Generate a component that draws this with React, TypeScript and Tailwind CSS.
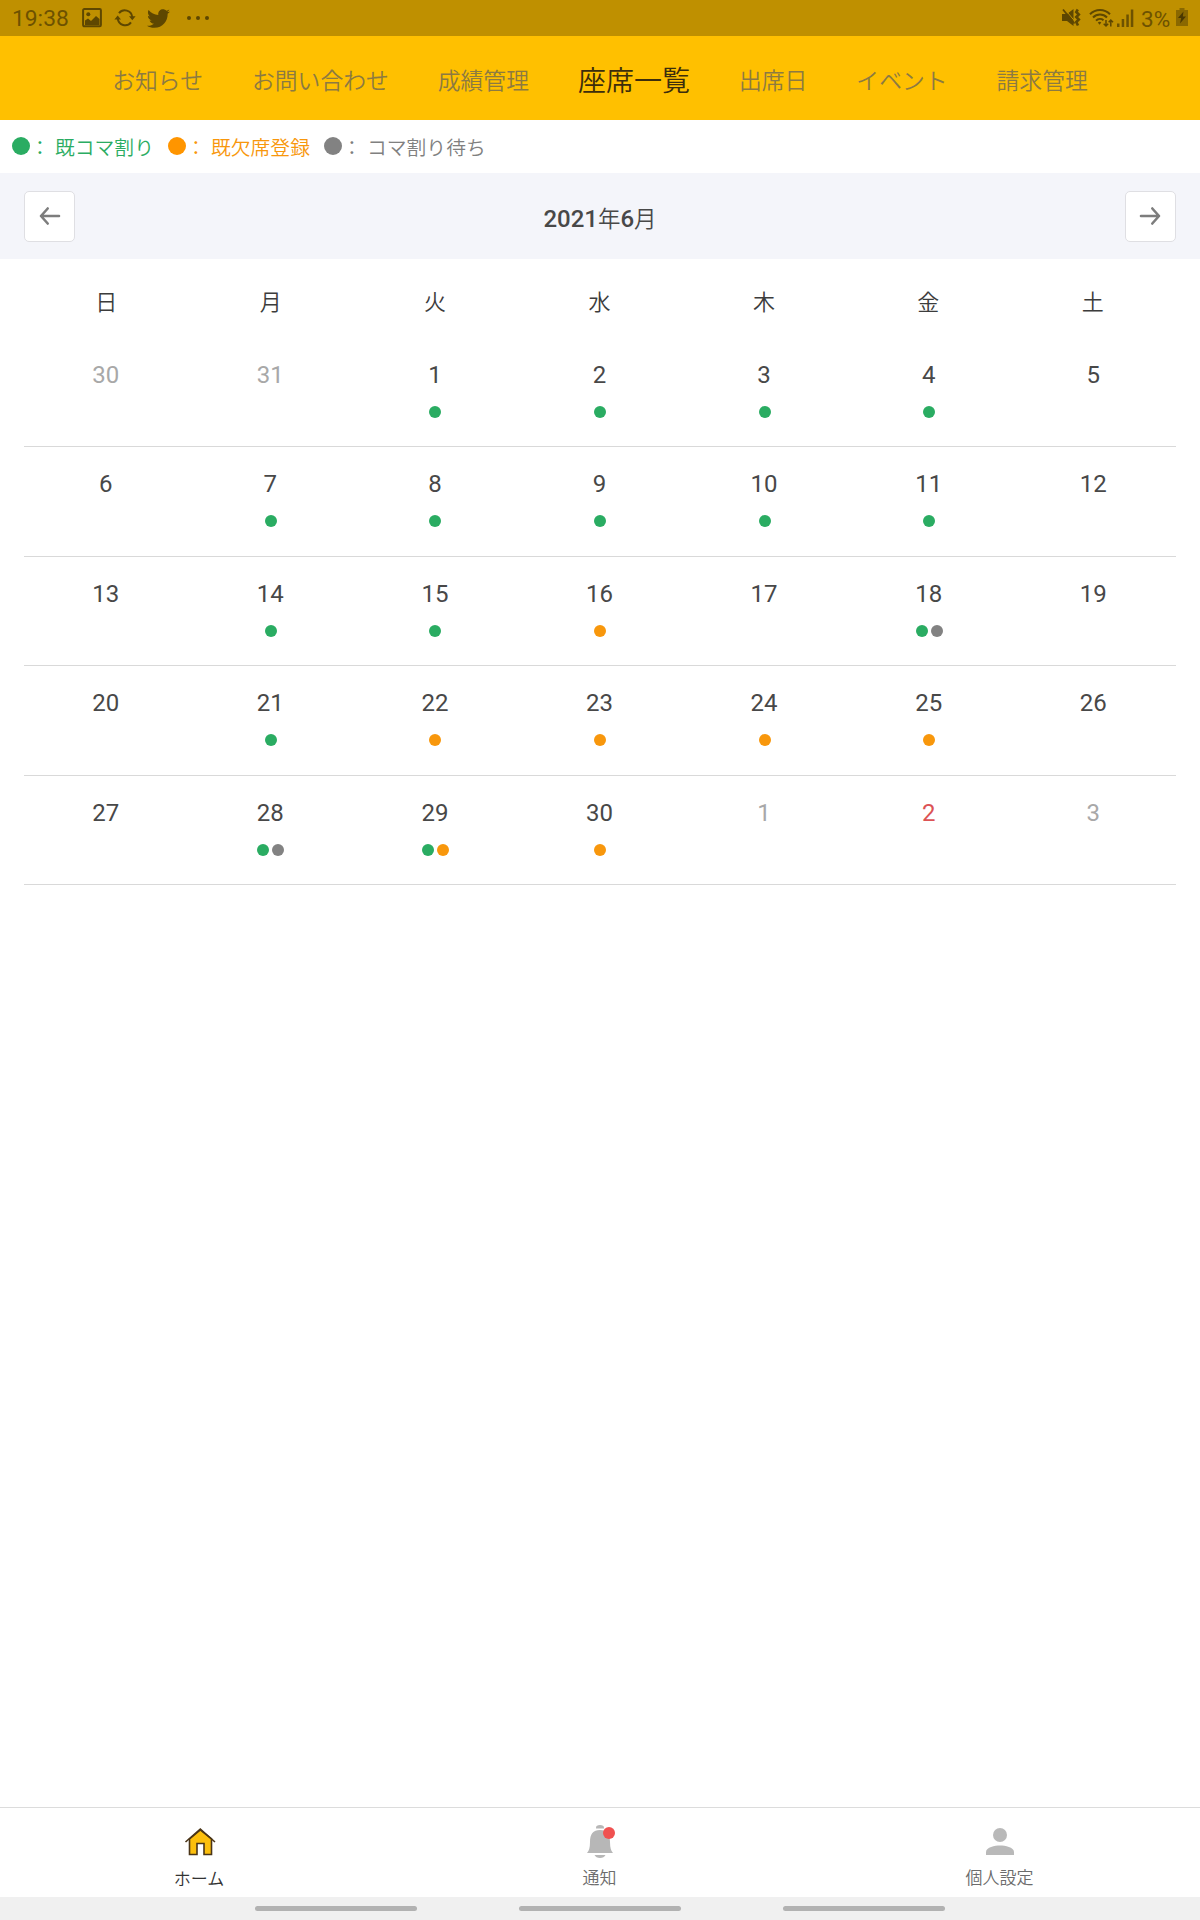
import React from "react";
import { FaTwitter } from "react-icons/fa";

const tabs = ["お知らせ", "お問い合わせ", "成績管理", "座席一覧", "出席日", "イベント", "請求管理"];
const activeTab = "座席一覧";
const weekdays = ["日", "月", "火", "水", "木", "金", "土"];

const dotColors = {
  g: "bg-[#2aac62]",
  o: "bg-[#f8970c]",
  w: "bg-[#828282]",
} as const;

type Mark = keyof typeof dotColors;
type Day = { n: number; marks?: Mark[]; tone?: "muted" | "holiday" };

const weeks: Day[][] = [
  [{ n: 30, tone: "muted" }, { n: 31, tone: "muted" }, { n: 1, marks: ["g"] }, { n: 2, marks: ["g"] }, { n: 3, marks: ["g"] }, { n: 4, marks: ["g"] }, { n: 5 }],
  [{ n: 6 }, { n: 7, marks: ["g"] }, { n: 8, marks: ["g"] }, { n: 9, marks: ["g"] }, { n: 10, marks: ["g"] }, { n: 11, marks: ["g"] }, { n: 12 }],
  [{ n: 13 }, { n: 14, marks: ["g"] }, { n: 15, marks: ["g"] }, { n: 16, marks: ["o"] }, { n: 17 }, { n: 18, marks: ["g", "w"] }, { n: 19 }],
  [{ n: 20 }, { n: 21, marks: ["g"] }, { n: 22, marks: ["o"] }, { n: 23, marks: ["o"] }, { n: 24, marks: ["o"] }, { n: 25, marks: ["o"] }, { n: 26 }],
  [{ n: 27 }, { n: 28, marks: ["g", "w"] }, { n: 29, marks: ["g", "o"] }, { n: 30, marks: ["o"] }, { n: 1, tone: "muted" }, { n: 2, tone: "holiday" }, { n: 3, tone: "muted" }],
];

function StatusBar() {
  return (
    <div className="flex h-9 shrink-0 items-center justify-between bg-[#bf9000] text-[22.8px] leading-none text-[#6d5200]">
      <div className="flex h-full items-center pl-3">
        <span className="w-[70px] pt-[3px]">19:38</span>
        <svg className="h-5 w-5" viewBox="0 0 20 20" fill="none">
          <rect x="1.1" y="1.1" width="17.8" height="17.2" rx="1.2" stroke="#5e4700" strokeWidth="2" />
          <circle cx="6.3" cy="6.3" r="2" fill="#5e4700" />
          <path d="M3 16V12.5L6 10.5L9 13L14 8L17.500 11V17H3Z" fill="#5e4700" />
        </svg>
        <svg className="ml-3 h-5 w-[22px]" viewBox="0 0 22 20" fill="none" stroke="#5e4700" strokeWidth="2">
          <path d="M5 5.2A7.4 7.4 0 0 1 18.2 9M17 14.4A7.4 7.4 0 0 1 3.8 10.6" />
          <path d="M15 8.2H21.6L18.3 12.2ZM.4 11.4H7L3.7 7.4Z" fill="#5e4700" stroke="none" />
        </svg>
        <FaTwitter className="ml-[11px] h-[23px] w-[23px] text-[#5e4700]" />
        <span className="ml-[17px] flex gap-[5px]">
          <i className="h-[4px] w-[4px] rounded-full bg-[#5e4700]" />
          <i className="h-[4px] w-[4px] rounded-full bg-[#5e4700]" />
          <i className="h-[4px] w-[4px] rounded-full bg-[#5e4700]" />
        </span>
      </div>
      <div className="flex h-full items-center pr-3">
        <svg className="h-5 w-5" viewBox="0 0 20 20" fill="none" stroke="#5e4700" strokeWidth="1.8">
          <path d="M0 6H5L11.500 1V18L5 13H0Z" fill="#5e4700" stroke="none" />
          <path d="M3 1.500L13 13.500" stroke="#bf9000" strokeWidth="1" />
          <path d="M1 1.500L12.500 15.500" />
          <path d="M15.800 1.500L14.300 4L16.800 6.500L14.300 9L16.800 11.500L14.300 14L16 17.500" strokeWidth="2.600" />
        </svg>
        <svg className="ml-[7px] h-5 w-[25px]" viewBox="0 0 25 20" fill="none" stroke="#5e4700" strokeWidth="2">
          <path d="M1 6.200A14 14 0 0 1 21 6.200M4 9.500A9.800 9.800 0 0 1 18 9.500M7 12.600A5.600 5.600 0 0 1 14.500 12.200" />
          <path d="M8.800 14.600A2.700 2.700 0 0 1 12.300 14.600L10.500 16.800Z" fill="#5e4700" stroke="none" />
          <path d="M17 12V18M14.700 15.700L17 18L19.200 15.700M21.800 18.500V12M19.700 14.300L21.800 12L24 14.300" strokeWidth="1.500" />
        </svg>
        <svg className="ml-[3px] h-5 w-[17px]" viewBox="0 0 17 20" fill="#6d5200">
          <rect x="0" y="15.500" width="2.500" height="3.500" />
          <rect x="4.700" y="11" width="2.500" height="8" />
          <rect x="9.300" y="6.500" width="2.500" height="12.500" />
          <rect x="13.800" y="1.500" width="2.500" height="17.500" />
        </svg>
        <span className="ml-[7px] w-[35px] pt-[3px] text-[22.500px]">3%</span>
        <svg className="mb-[2px] h-[18px] w-3" viewBox="0 0 12 18">
          <path d="M3.500 0H8.500V2H12V18H0V2H3.500Z" fill="#8a6800" />
          <path d="M7.500 3.500L2 10H5.200L4 15.500L10 8.500H6.800Z" fill="#4b3800" />
        </svg>
      </div>
    </div>
  );
}

function LegendItem({ label, dot, text }: { label: string; dot: string; text: string }) {
  return (
    <div className={"flex w-[156px] items-center whitespace-nowrap " + text}>
      <span className={"h-[18px] w-[18px] shrink-0 rounded-full " + dot} />
      <span className="w-[25px] shrink-0 pt-[4px]">：</span>
      <span className="pt-[4px]">{label}</span>
    </div>
  );
}

function MonthButton({ next }: { next?: boolean }) {
  return (
    <button className="flex h-[51px] w-[51px] items-center justify-center rounded-[5px] border border-[#dfdfe3] bg-white">
      <svg className="h-5 w-[22px]" viewBox="0 0 22 20" fill="none" stroke="#7d7d7d" strokeWidth="2.600" strokeLinecap="round" strokeLinejoin="round">
        <path d={next ? "M2 10H20M13.300 2.500L20 10L13.300 17.500" : "M20 10H2M8.700 2.500L2 10L8.700 17.500"} />
      </svg>
    </button>
  );
}

function DayCell({ day }: { day: Day }) {
  const tone =
    day.tone === "muted" ? "text-[#a8a8a8]" : day.tone === "holiday" ? "text-[#dc5355]" : "text-[#484848]";
  return (
    <div className="flex flex-col items-center pt-[23px] pr-px">
      <span className={"text-[24px] leading-7 " + tone}>{day.n}</span>
      <div className="mt-[17px] flex gap-[3px] pl-px">
        {day.marks?.map((m) => <i key={m} className={"h-3 w-3 rounded-full " + dotColors[m]} />)}
      </div>
    </div>
  );
}

export default function App() {
  return (
    <div
      lang="ja"
      className="flex h-[1920px] w-[1200px] flex-col overflow-hidden bg-white font-['Roboto','Noto_Sans_CJK_JP',sans-serif]"
    >
      <StatusBar />
      <nav className="flex h-[84px] shrink-0 items-center justify-center gap-[49px] bg-[#ffc000] pt-[8px] text-[22.8px] leading-none font-[350] text-[#8c7a42]">
        {tabs.map((t) => (
          <span key={t} className={t === activeTab ? "text-[28px] text-[#3c2d0c]" : ""}>
            {t}
          </span>
        ))}
      </nav>
      <div className="flex h-[53px] shrink-0 items-center pl-3 text-[19.8px] leading-none font-[350]">
        <LegendItem label="既コマ割り" dot="bg-[#2aac62]" text="text-[#2aac62]" />
        <LegendItem label="既欠席登録" dot="bg-[#ff9500]" text="text-[#f8970c]" />
        <LegendItem label="コマ割り待ち" dot="bg-[#828282]" text="text-[#808080]" />
      </div>
      <header className="flex h-[86px] shrink-0 items-center justify-between bg-[#f4f5fa] px-6 text-[#484848]">
        <MonthButton />
        <h1 className="pt-[6px] text-[24px] leading-none font-medium">
          2021<span className="text-[22.500px] font-[350]">年</span>6<span className="text-[22.500px] font-[350]">月</span>
        </h1>
        <MonthButton next />
      </header>
      <main className="flex-1 px-6">
        <div className="grid h-[79px] grid-cols-7 pt-[33px] pr-px text-center text-[22px] leading-none font-[350] text-[#3c3c3c]">
          {weekdays.map((d) => <span key={d}>{d}</span>)}
        </div>
        {weeks.map((week, i) => (
          <div key={i} className="grid h-[109.4px] grid-cols-7 border-b border-[#d9d9d9]">
            {week.map((day, j) => <DayCell key={j} day={day} />)}
          </div>
        ))}
      </main>
      <footer className="grid h-[90px] shrink-0 grid-cols-3 border-t border-[#dcdcdc] text-[17px] leading-none font-[350] text-[#6c6c6c]">
        <div className="flex flex-col items-center pt-[18px] text-[#333]">
          <svg className="h-8 w-8" viewBox="0 0 32 32" fill="#fcbf0d" stroke="#4a3518" strokeWidth="1.600">
            <path d="M5.500 13V28.500H13V17.500H20V28.500H27.500V13L16.300 4Z" />
            <path d="M1.500 16L16.300 3L31 16" fill="none" />
          </svg>
          <span className="mt-[13px] pr-[2px]">ホーム</span>
        </div>
        <div className="flex flex-col items-center pt-[16px]">
          <svg className="h-9 w-8" viewBox="0 0 32 36" fill="#b7b7b7">
            <path d="M12 4.500V3.500Q12 1 16 1T20 3.500V4.500Z" />
            <path d="M3 29Q6 26 6 18C6 10 9 6 16 6S26 10 26 18Q26 26 29 29Z" />
            <path d="M10.500 31H21.500Q20 34 16 34T10.500 31Z" />
            <circle cx="25" cy="9" r="6" fill="#f05150" />
          </svg>
          <span className="mt-[10px] pr-px">通知</span>
        </div>
        <div className="flex flex-col items-center pt-[18px]">
          <svg className="h-8 w-8" viewBox="0 0 32 32" fill="#b9b9b9">
            <circle cx="16" cy="9" r="7" />
            <path d="M2 29V26C2 21 11 19.500 16 19.500S30 21 30 26V29Z" />
          </svg>
          <span className="mt-[12px] pr-px">個人設定</span>
        </div>
      </footer>
      <div className="flex h-[23px] shrink-0 items-center justify-center gap-[102px] bg-[#f0f0f0]">
        <i className="h-[5px] w-[162px] rounded-full bg-[#b2b2b2]" />
        <i className="h-[5px] w-[162px] rounded-full bg-[#b2b2b2]" />
        <i className="h-[5px] w-[162px] rounded-full bg-[#b2b2b2]" />
      </div>
    </div>
  );
}
